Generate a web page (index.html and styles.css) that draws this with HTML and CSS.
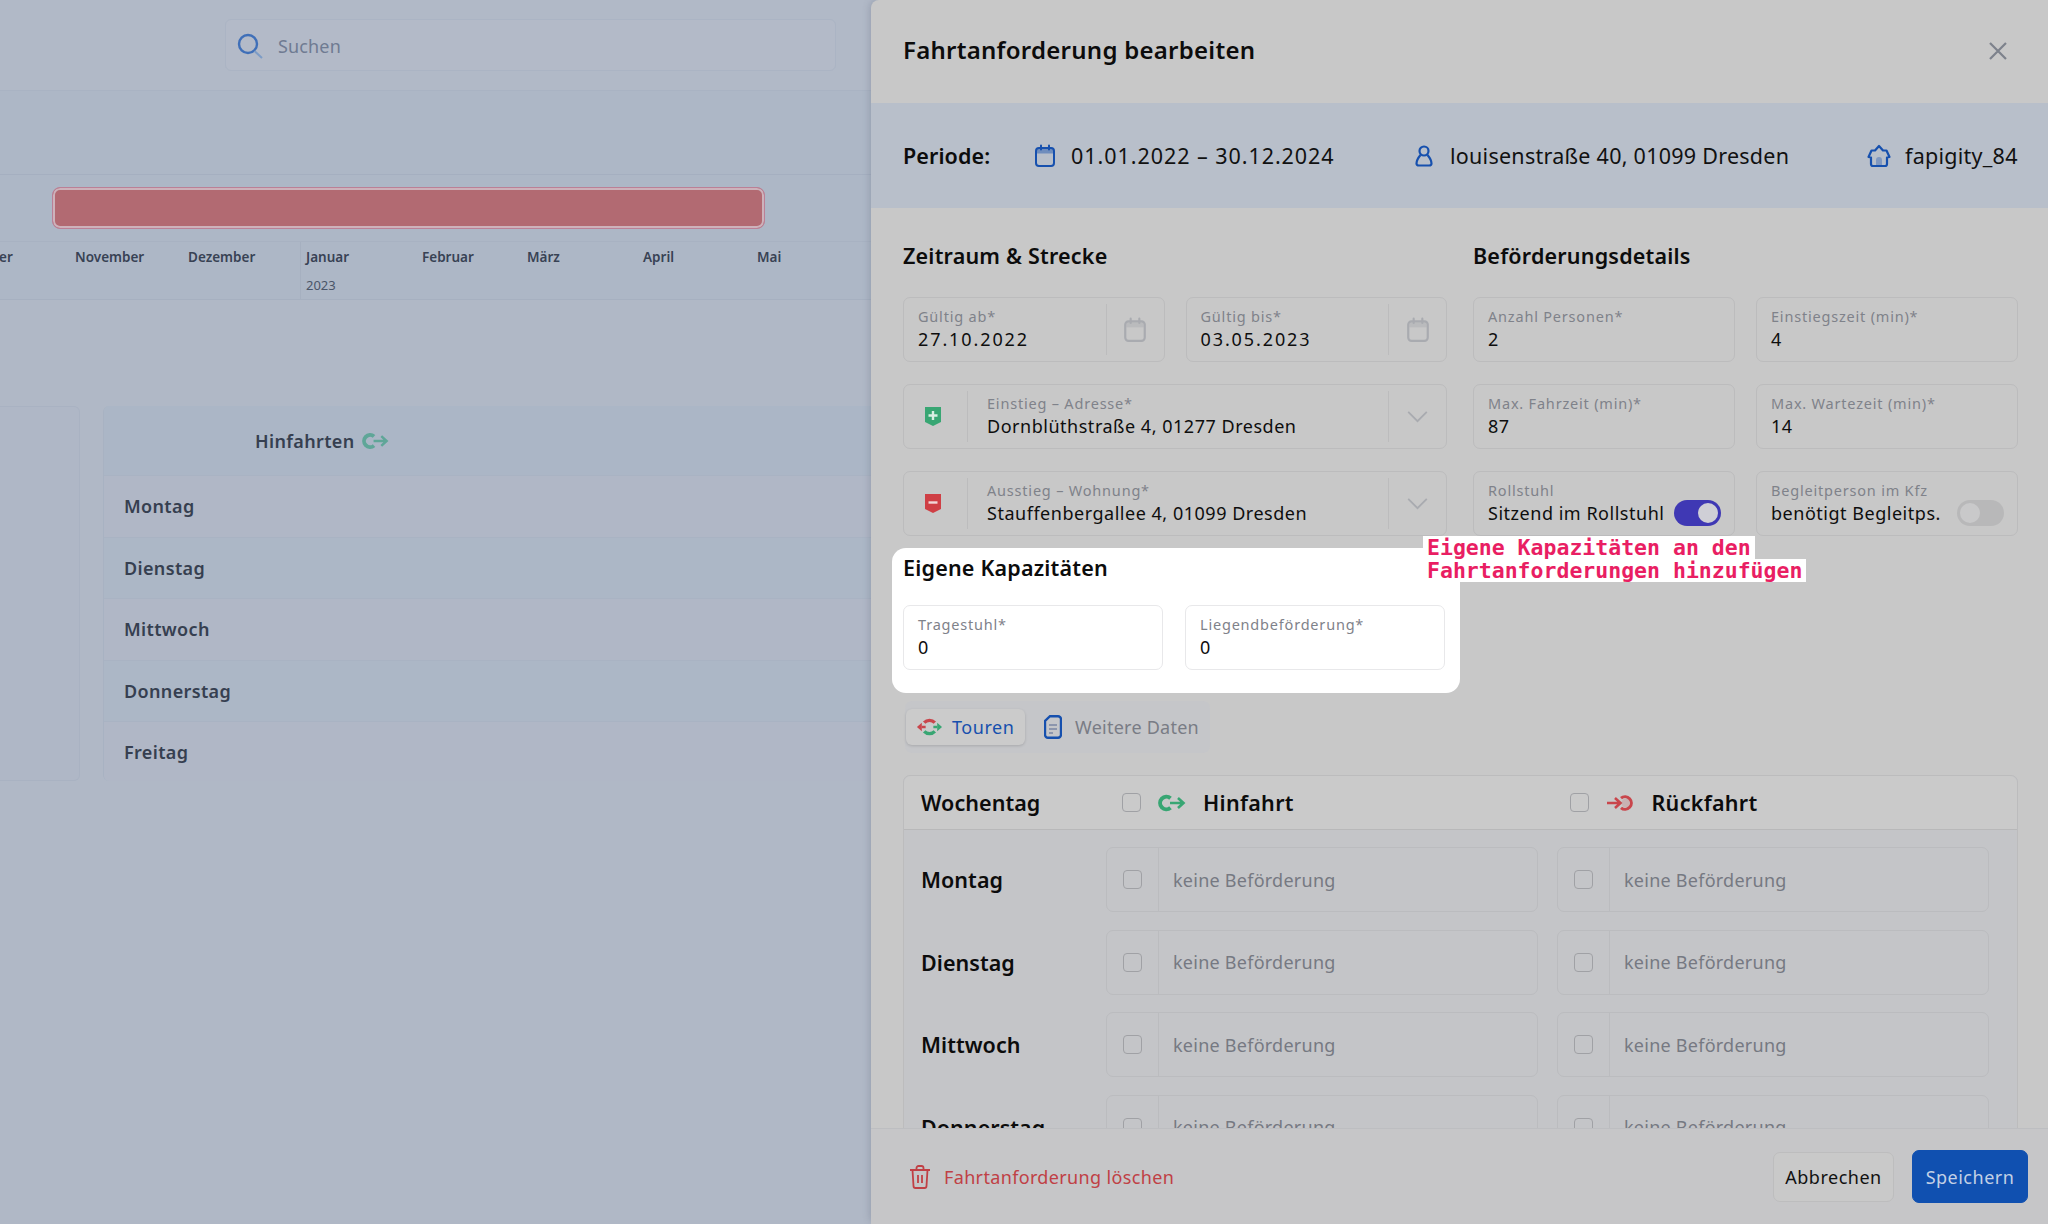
FILE: index.html
```html
<!DOCTYPE html>
<html lang="de">
<head>
    <meta charset="UTF-8">
    <title>Fahrtanforderung bearbeiten</title>
    <link rel="stylesheet" href="styles.css">
</head>
<body>
    <svg class="defs" width="0" height="0">
        <symbol id="i-calendar" viewBox="0 0 24 24">
            <rect x="3" y="4" width="18" height="18" rx="3" fill="none" stroke="currentColor" stroke-width="2"/>
            <rect x="4" y="5" width="16" height="4.5" fill="currentColor" opacity=".45"/>
            <path d="M8 1.5v4M16 1.5v4" stroke="currentColor" stroke-width="2" stroke-linecap="round"/>
        </symbol>
        <symbol id="i-go" viewBox="0 0 28 18">
            <path d="M12.500 4.200A6.300 6.300 0 1 0 12.500 13.800" fill="none" stroke="currentColor" stroke-width="4"/>
            <path d="M12 9h13.500M20 4 25.500 9 20 14" fill="none" stroke="currentColor" stroke-width="2.600"/>
        </symbol>
        <symbol id="i-back" viewBox="0 0 28 18">
            <path d="M15 4.200A6.300 6.300 0 1 1 15 13.800" fill="none" stroke="currentColor" stroke-width="3"/>
            <circle cx="20" cy="9" r="4.500" fill="currentColor" opacity=".18"/>
            <path d="M1 9h13.500M9 4l5.500 5L9 14" fill="none" stroke="currentColor" stroke-width="2.600"/>
        </symbol>
        <symbol id="i-chevron" viewBox="0 0 24 14">
            <path d="M2 2l10 10L22 2" fill="none" stroke="currentColor" stroke-width="2"/>
        </symbol>
    </svg>

    <div class="page">
        <main class="backdrop">
            <div class="topbar">
                <div class="search">
                    <svg class="search-icon" viewBox="0 0 26 26"><circle cx="11" cy="11" r="9" fill="none" stroke="#3f6fb8" stroke-width="2.400"/><path d="M17.500 18 25 25" stroke="#7d9cc6" stroke-width="2"/></svg>
                    <span>Suchen</span>
                </div>
            </div>
            <div class="spacer-row"></div>
            <div class="timeline-row">
                <div class="timeline-bar"></div>
            </div>
            <div class="months">
                <div class="month m-0"><b>er</b></div>
                <div class="month m-1"><b>November</b></div>
                <div class="month m-2"><b>Dezember</b></div>
                <div class="month m-3"><b>Januar</b><span>2023</span></div>
                <div class="month m-4"><b>Februar</b></div>
                <div class="month m-5"><b>März</b></div>
                <div class="month m-6"><b>April</b></div>
                <div class="month m-7"><b>Mai</b></div>
            </div>
            <div class="cards">
                <div class="side-card"></div>
                <div class="trips-card">
                    <div class="trips-head">Hinfahrten <svg class="trips-icon"><use href="#i-go"/></svg></div>
                    <div class="trips-row">Montag</div>
                    <div class="trips-row alt">Dienstag</div>
                    <div class="trips-row">Mittwoch</div>
                    <div class="trips-row alt">Donnerstag</div>
                    <div class="trips-row">Freitag</div>
                </div>
            </div>
        </main>

        <aside class="panel">
            <header class="panel-head">
                <h1>Fahrtanforderung bearbeiten</h1>
                <svg class="close" viewBox="0 0 20 20"><path d="M2 2l16 16M18 2 2 18" stroke="#7d828c" stroke-width="2.200"/></svg>
            </header>

            <div class="period">
                <strong>Periode:</strong>
                <span class="period-item p-date"><svg class="period-icon"><use href="#i-calendar"/></svg>01.01.2022 – 30.12.2024</span>
                <span class="period-item p-addr"><svg class="period-icon" viewBox="0 0 24 24"><circle cx="12" cy="7" r="4.500" fill="none" stroke="currentColor" stroke-width="2.200"/><path d="M8.500 11C6 14 4.500 17 4.500 19.500c0 1.500 1 2 2.500 2h10c1.500 0 2.500-.5 2.500-2C19.500 17 18 14 15.500 11" fill="none" stroke="currentColor" stroke-width="2.200"/></svg>louisenstraße 40, 01099 Dresden</span>
                <span class="period-item p-user"><svg class="period-icon" viewBox="0 0 24 24"><path d="M12 2l4 4.500h3.500L22.500 13l-2.500.5V20a2 2 0 0 1-2 2H6a2 2 0 0 1-2-2v-6.500L1.500 13l3-6.500H8z" fill="none" stroke="currentColor" stroke-width="2.200" stroke-linejoin="round"/><path d="M9 22v-6a3 3 0 0 1 6 0v6z" fill="currentColor" opacity=".35"/></svg>fapigity_84</span>
            </div>

            <div class="panel-body">
                <div class="form-grid">
                    <section class="form-col">
                        <h2>Zeitraum &amp; Strecke</h2>
                        <div class="field-row">
                            <div class="field has-end">
                                <div class="field-text"><label>Gültig ab*</label><div class="value tight">27.10.2022</div></div>
                                <div class="field-end"><svg class="cal"><use href="#i-calendar"/></svg></div>
                            </div>
                            <div class="field has-end">
                                <div class="field-text"><label>Gültig bis*</label><div class="value tight">03.05.2023</div></div>
                                <div class="field-end"><svg class="cal"><use href="#i-calendar"/></svg></div>
                            </div>
                        </div>
                        <div class="field select">
                            <div class="field-start">
                                <svg class="stop" viewBox="0 0 16 19"><path d="M0 0h16v15l-8 4-8-4z" fill="#38a673"/><path d="M8 4v9M3.500 8.500h9" stroke="#d8eee2" stroke-width="2.400"/></svg>
                            </div>
                            <div class="field-text"><label>Einstieg – Adresse*</label><div class="value">Dornblüthstraße 4, 01277 Dresden</div></div>
                            <div class="field-end wide"><svg class="chevron"><use href="#i-chevron"/></svg></div>
                        </div>
                        <div class="field select">
                            <div class="field-start">
                                <svg class="stop" viewBox="0 0 16 19"><path d="M0 0h16v15l-8 4-8-4z" fill="#cf3f45"/><path d="M3.500 8.500h9" stroke="#f1d7d8" stroke-width="2.400"/></svg>
                            </div>
                            <div class="field-text"><label>Ausstieg – Wohnung*</label><div class="value">Stauffenbergallee 4, 01099 Dresden</div></div>
                            <div class="field-end wide"><svg class="chevron"><use href="#i-chevron"/></svg></div>
                        </div>
                        <div class="spotlight">
                            <h2>Eigene Kapazitäten</h2>
                            <div class="field-row">
                                <div class="field white"><div class="field-text"><label>Tragestuhl*</label><div class="value">0</div></div></div>
                                <div class="field white"><div class="field-text"><label>Liegendbeförderung*</label><div class="value">0</div></div></div>
                            </div>
                        </div>
                    </section>

                    <section class="form-col">
                        <h2>Beförderungsdetails</h2>
                        <div class="field-row">
                            <div class="field"><div class="field-text"><label>Anzahl Personen*</label><div class="value">2</div></div></div>
                            <div class="field"><div class="field-text"><label>Einstiegszeit (min)*</label><div class="value">4</div></div></div>
                        </div>
                        <div class="field-row">
                            <div class="field"><div class="field-text"><label>Max. Fahrzeit (min)*</label><div class="value">87</div></div></div>
                            <div class="field"><div class="field-text"><label>Max. Wartezeit (min)*</label><div class="value">14</div></div></div>
                        </div>
                        <div class="field-row">
                            <div class="field switch-field">
                                <div class="field-text"><label>Rollstuhl</label><div class="value">Sitzend im Rollstuhl</div></div>
                                <span class="switch on"></span>
                            </div>
                            <div class="field switch-field">
                                <div class="field-text"><label>Begleitperson im Kfz</label><div class="value">benötigt Begleitps.</div></div>
                                <span class="switch"></span>
                            </div>
                        </div>
                    </section>
                </div>

                <div class="tabs">
                    <div class="tab active">
                        <svg class="tab-icon" viewBox="0 0 28 20"><path d="M8.500 5.500a7.500 7.500 0 0 1 11 0" fill="none" stroke="#c9464c" stroke-width="3.400"/><path d="M19.500 14.500a7.500 7.500 0 0 1-11 0" fill="none" stroke="#38a673" stroke-width="3.400"/><path d="M1 10l5-4.500v9z" fill="#c9464c"/><path d="M6 10h4" stroke="#c9464c" stroke-width="2.600"/><path d="M27 10l-5-4.500v9z" fill="#38a673"/><path d="M22 10h-4" stroke="#38a673" stroke-width="2.600"/></svg>
                        Touren
                    </div>
                    <div class="tab">
                        <svg class="doc-icon" viewBox="0 0 18 24"><path d="M6 1.200h8a3 3 0 0 1 3 3v15.600a3 3 0 0 1-3 3H4a3 3 0 0 1-3-3V6z" fill="none" stroke="#1650ae" stroke-width="2.400"/><path d="M5 10h8M5 14h8M5 18h4" stroke="#8d96ad" stroke-width="2.200"/></svg>
                        Weitere Daten
                    </div>
                </div>

                <div class="week">
                    <div class="week-head">
                        <span class="week-day">Wochentag</span>
                        <div class="week-col">
                            <span class="check"></span>
                            <svg class="dir-icon go"><use href="#i-go"/></svg>
                            <span class="dir-name">Hinfahrt</span>
                        </div>
                        <div class="week-col">
                            <span class="check"></span>
                            <svg class="dir-icon back"><use href="#i-back"/></svg>
                            <span class="dir-name">Rückfahrt</span>
                        </div>
                    </div>
                    <div class="week-row">
                        <span class="week-day">Montag</span>
                        <div class="ride"><div class="ride-check"><span class="check"></span></div><span class="ride-text">keine Beförderung</span></div>
                        <div class="ride"><div class="ride-check"><span class="check"></span></div><span class="ride-text">keine Beförderung</span></div>
                    </div>
                    <div class="week-row">
                        <span class="week-day">Dienstag</span>
                        <div class="ride"><div class="ride-check"><span class="check"></span></div><span class="ride-text">keine Beförderung</span></div>
                        <div class="ride"><div class="ride-check"><span class="check"></span></div><span class="ride-text">keine Beförderung</span></div>
                    </div>
                    <div class="week-row">
                        <span class="week-day">Mittwoch</span>
                        <div class="ride"><div class="ride-check"><span class="check"></span></div><span class="ride-text">keine Beförderung</span></div>
                        <div class="ride"><div class="ride-check"><span class="check"></span></div><span class="ride-text">keine Beförderung</span></div>
                    </div>
                    <div class="week-row">
                        <span class="week-day">Donnerstag</span>
                        <div class="ride"><div class="ride-check"><span class="check"></span></div><span class="ride-text">keine Beförderung</span></div>
                        <div class="ride"><div class="ride-check"><span class="check"></span></div><span class="ride-text">keine Beförderung</span></div>
                    </div>
                </div>
            </div>

            <footer class="panel-foot">
                <div class="delete">
                    <svg class="trash" viewBox="0 0 22 24"><path d="M1 5h20M7.500 5V3a2 2 0 0 1 2-2h3a2 2 0 0 1 2 2v2M3.500 5l1 16a2 2 0 0 0 2 2h9a2 2 0 0 0 2-2l1-16M9 10v8M13 10v8" fill="none" stroke="currentColor" stroke-width="1.800"/></svg>
                    Fahrtanforderung löschen
                </div>
                <div class="foot-actions">
                    <button class="btn">Abbrechen</button>
                    <button class="btn primary">Speichern</button>
                </div>
            </footer>

            <div class="note"><span>Eigene Kapazitäten an den</span><span>Fahrtanforderungen hinzufügen</span></div>
        </aside>
    </div>
</body>
</html>
```

FILE: styles.css
```css
* {
    box-sizing: border-box;
}
html, body {
    margin: 0;
    height: 100%;
    overflow: hidden;
}
body {
    font-family: "Noto Sans", "Open Sans", sans-serif;
    color: #0c0c0c;
    background-color: #b0b8c6;
}
.defs {
    position: absolute;
}
.page {
    display: flex;
    width: 2048px;
    height: 1224px;
}

/* dimmed page behind the panel */
.backdrop {
    width: 871px;
    flex: none;
    overflow: hidden;
}
.topbar {
    height: 91px;
    padding: 19px 35px 0 225px;
    background-color: #b1b9c7;
    border-bottom: 1px solid #a9b3c3;
}
.search {
    display: flex;
    align-items: center;
    gap: 15px;
    height: 52px;
    padding: 1px 0 0 11px;
    font-size: 18px;
    letter-spacing: .15px;
    color: #6f7b92;
    background-color: #b3bac8;
    border: 1px solid #abb4c4;
    border-radius: 6px;
}
.search-icon {
    width: 26px;
    height: 26px;
}
.spacer-row {
    height: 84px;
    background-color: #adb7c6;
    border-bottom: 1px solid #a5afc0;
}
.timeline-row {
    height: 67px;
    padding: 12px 106px 0 52px;
    background-color: #adb7c6;
    border-bottom: 1px solid #a8b2c2;
}
.timeline-bar {
    height: 42px;
    background-color: #b26a72;
    border: 1px solid #bb8096;
    border-radius: 8px;
    box-shadow: inset 0 0 0 2px #cdb2bb;
}
.months {
    display: flex;
    height: 58px;
    background-color: #adb7c6;
    border-bottom: 1px solid #a6b0c0;
    font-size: 13.500px;
    color: #384254;
}
.month {
    padding-top: 6px;
    line-height: 18px;
}
.month b {
    display: block;
    font-weight: 600;
}
.month span {
    display: block;
    margin-top: 10px;
    font-size: 13px;
    color: #4a5568;
}
.m-0 { width: 75px; padding-left: 0; }
.m-0 b { margin-left: -1px; }
.m-1 { width: 113px; }
.m-2 { width: 112px; }
.m-3 { width: 122px; padding-left: 5px; border-left: 1px solid #a6b0c0; }
.m-4 { width: 105px; }
.m-5 { width: 116px; }
.m-6 { width: 114px; }
.cards {
    display: flex;
    gap: 23px;
    margin-top: 106px;
    height: 375px;
}
.side-card {
    width: 80px;
    flex: none;
    background-color: #afb7c6;
    border: 1px solid #a9b2c2;
    border-left: 0;
    border-radius: 0 6px 6px 0;
}
.trips-card {
    flex: 1;
    font-size: 18px;
    font-weight: 600;
    letter-spacing: .35px;
    color: #363f50;
    border-left: 1px solid #a8b2c2;
    border-radius: 6px 0 0 6px;
    overflow: hidden;
}
.trips-head {
    display: flex;
    align-items: center;
    gap: 7px;
    height: 69px;
    padding-left: 151px;
    background-color: #abb6c6;
}
.trips-icon {
    width: 27px;
    height: 18px;
    color: #5fa698;
}
.trips-row {
    display: flex;
    align-items: center;
    height: 61.500px;
    padding-left: 20px;
    background-color: #b0b7c6;
    border-top: 1px solid #a9b3c3;
}
.trips-row.alt {
    background-color: #acb7c6;
}

/* edit panel */
.panel {
    position: relative;
    display: flex;
    flex-direction: column;
    flex: 1;
    min-width: 0;
    height: 1224px;
    background-color: #c8c8c8;
    border-radius: 8px 0 0 8px;
    box-shadow: -2px 0 6px rgba(90, 100, 120, .25);
}
.panel-head {
    display: flex;
    justify-content: space-between;
    align-items: center;
    flex: none;
    height: 103px;
    padding: 0 40px 5px 32px;
}
.panel-head h1 {
    margin: 0;
    font-size: 24px;
    font-weight: 600;
    letter-spacing: .26px;
}
.close {
    width: 20px;
    height: 20px;
    margin-top: 3px;
}
.period {
    display: flex;
    align-items: center;
    flex: none;
    height: 105px;
    padding-left: 32px;
    background-color: #b8bfca;
    font-size: 21.500px;
}
.period strong {
    width: 130px;
    font-weight: 600;
    letter-spacing: .1px;
}
.period-item {
    display: flex;
    align-items: center;
    color: #111;
    letter-spacing: .26px;
}
.period-icon {
    flex: none;
    width: 24px;
    height: 24px;
    margin-right: 14px;
    color: #1650ae;
}
.p-date {
    width: 379px;
    letter-spacing: .95px;
}
.p-addr { width: 455px; }

.panel-body {
    flex: 1;
    min-height: 0;
    padding: 0 30px 0 32px;
    overflow: hidden;
    background-color: #c8c8c8;
}
.form-grid {
    display: grid;
    grid-template-columns: 544px 545px;
    gap: 26px;
}
.form-col {
    display: flex;
    flex-direction: column;
    gap: 22px;
}
h2 {
    margin: 36px 0 7px;
    font-size: 21.500px;
    line-height: 24px;
    font-weight: 600;
    letter-spacing: .2px;
}
.field-row {
    display: grid;
    grid-template-columns: 1fr 1fr;
    gap: 21px;
}
.field {
    display: flex;
    align-items: stretch;
    height: 65px;
    min-width: 0;
    border: 1px solid #bcbcbd;
    border-radius: 7px;
    background-color: #c8c8c8;
}
.field-text {
    flex: 1;
    min-width: 0;
    padding: 8px 0 0 14px;
    white-space: nowrap;
}
.field label {
    display: block;
    font-size: 14.500px;
    line-height: 20px;
    letter-spacing: .8px;
    color: #7f828a;
}
.value {
    font-size: 18px;
    line-height: 26px;
    letter-spacing: .52px;
    color: #0e0e0e;
}
.value.tight {
    letter-spacing: 1.900px;
}
.field-end {
    display: flex;
    align-items: center;
    justify-content: center;
    width: 58px;
    margin: 6px 0;
    border-left: 1px solid #bcbcbd;
}
.cal {
    width: 26px;
    height: 26px;
    color: #a9abb0;
}
.field-start {
    display: flex;
    align-items: center;
    justify-content: center;
    width: 64px;
    margin: 6px 0;
    border-right: 1px solid #bcbcbd;
}
.stop {
    width: 16px;
    height: 19px;
    margin-left: -6px;
}
.select .field-text {
    padding-left: 19px;
}
.chevron {
    width: 23px;
    height: 13px;
    color: #a9abb0;
}
.switch-field {
    align-items: flex-start;
    padding-right: 13px;
}
.switch {
    flex: none;
    position: relative;
    width: 47px;
    height: 26px;
    margin-top: 28px;
    border-radius: 13px;
    background-color: #b8b8b9;
}
.switch::after {
    content: "";
    position: absolute;
    top: 3px;
    left: 3px;
    width: 20px;
    height: 20px;
    border-radius: 50%;
    background-color: #c9c9ca;
}
.switch.on {
    background-color: #3f38b4;
}
.switch.on::after {
    left: 24px;
    background-color: #cfcfd6;
}

/* white cut-out over the dimmed panel */
.spotlight {
    position: relative;
    height: 145px;
    margin: -10px -13px 0 -11px;
    padding: 8px 15px 0 11px;
    background-color: #fff;
    border-radius: 14px;
}
.spotlight h2 {
    margin: 0 0 25px;
}
.spotlight .field-row {
    gap: 22px;
}
.field.white {
    height: 65px;
    background-color: #fff;
    border-color: #e8e8ea;
}
.note {
    position: absolute;
    left: 552px;
    top: 536px;
    display: flex;
    flex-direction: column;
    align-items: flex-start;
    font-family: "DejaVu Sans Mono", "Liberation Mono", monospace;
    font-weight: 700;
    font-size: 21.500px;
    line-height: 23px;
    color: #e91e63;
}
.note span {
    padding: 0 4px;
    background-color: #fff;
    white-space: nowrap;
}

.tabs {
    display: flex;
    align-items: center;
    gap: 15px;
    width: 305px;
    height: 52px;
    margin: 8px 0 22px 2px;
    padding-left: 1px;
    background-color: #c5c6c9;
    border-radius: 7px;
    font-size: 18px;
    letter-spacing: .55px;
    color: #797c85;
}
.tab {
    display: flex;
    align-items: center;
    height: 36px;
}
.tab.active {
    gap: 9px;
    width: 119px;
    padding-left: 10px;
    color: #1650ae;
    background-color: #cbcbcb;
    border-radius: 6px;
    box-shadow: 0 1px 3px rgba(0, 0, 0, .15);
}
.tab:not(.active) {
    gap: 13px;
    margin-left: 4px;
    letter-spacing: .25px;
}
.tab-icon {
    width: 27px;
    height: 20px;
}
.doc-icon {
    width: 18px;
    height: 24px;
}

.week {
    height: 500px;
    border: 1px solid #bcbcbd;
    border-radius: 7px 7px 0 0;
    background-color: #c4c5c8;
}
.week-head {
    display: flex;
    align-items: center;
    height: 54px;
    background-color: #cacaca;
    border-bottom: 1px solid #b8b8b9;
    border-radius: 7px 7px 0 0;
}
.week-day {
    width: 183px;
    padding-left: 17px;
    flex: none;
    font-size: 21.500px;
    font-weight: 600;
    letter-spacing: .05px;
}
.week-head .week-day {
    width: 218px;
}
.week-col {
    display: flex;
    align-items: center;
    width: 451px;
}
.week-col .dir-icon {
    margin: 0 17px 0 17px;
}
.week-col + .week-col .dir-icon {
    margin-right: 18px;
}
.dir-name {
    font-size: 21.500px;
    font-weight: 600;
    letter-spacing: .3px;
}
.dir-icon {
    width: 28px;
    height: 18px;
}
.dir-icon.go { color: #38a673; }
.dir-icon.back { color: #c9464c; }
.check {
    display: block;
    width: 19px;
    height: 19px;
    border: 1.500px solid #a0a1a5;
    border-radius: 4px;
}
.week-row {
    display: flex;
    align-items: center;
    gap: 19px;
    height: 65px;
    margin-top: 17.500px;
}
.week-head + .week-row {
    margin-top: 17px;
}
.ride {
    display: flex;
    align-items: center;
    width: 432px;
    flex: none;
    height: 65px;
    border: 1px solid #bbbcbf;
    border-radius: 7px;
}
.ride-check {
    display: flex;
    align-items: center;
    justify-content: center;
    width: 52px;
    height: 100%;
    border-right: 1px solid #bbbcbf;
}
.ride-text {
    padding-left: 14px;
    font-size: 18px;
    letter-spacing: .25px;
    color: #767982;
}

.panel-foot {
    display: flex;
    justify-content: space-between;
    align-items: center;
    flex: none;
    height: 96px;
    padding: 0 20px 0 38px;
    background-color: #c6c6c8;
    border-top: 1px solid #bdbec1;
}
.delete {
    display: flex;
    align-items: center;
    gap: 13px;
    font-size: 18px;
    letter-spacing: .35px;
    color: #c04045;
}
.trash {
    width: 22px;
    height: 24px;
}
.foot-actions {
    display: flex;
    align-items: center;
    gap: 18px;
}
.btn {
    height: 50px;
    width: 121px;
    font-family: inherit;
    font-size: 18px;
    letter-spacing: .5px;
    color: #111;
    background-color: #c9c9c9;
    border: 1px solid #bdbdbe;
    border-radius: 7px;
}
.btn.primary {
    width: 116px;
    height: 53px;
    color: #c3d0e6;
    background-color: #1050b0;
    border-color: #1050b0;
}
```
